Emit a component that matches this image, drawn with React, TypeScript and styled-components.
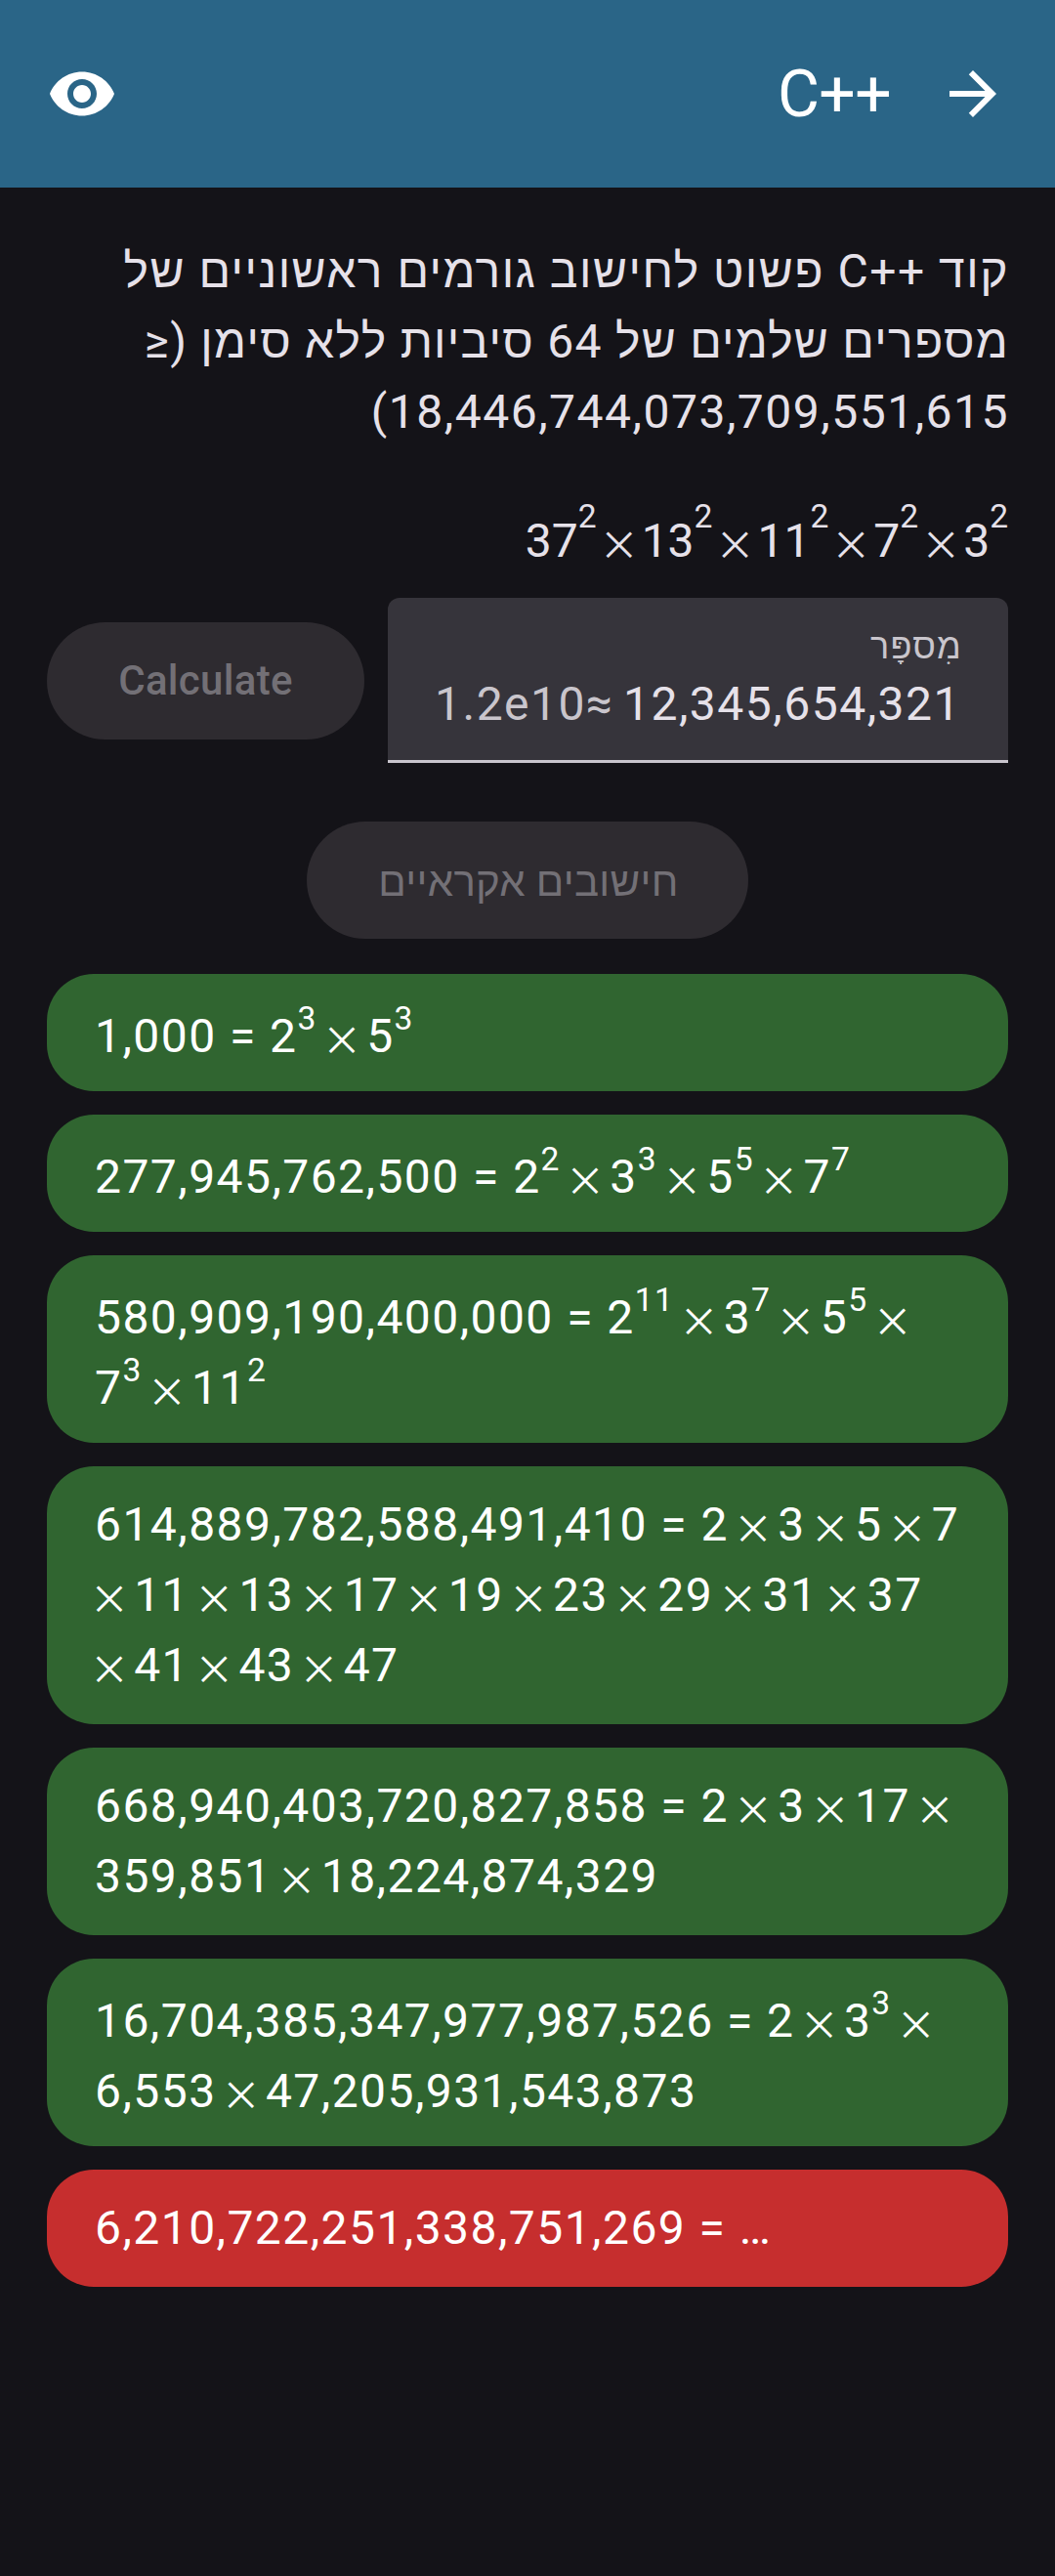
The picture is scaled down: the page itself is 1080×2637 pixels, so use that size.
import React from "react";
import styled, { createGlobalStyle } from "styled-components";

const GlobalStyle = createGlobalStyle`
  html, body { margin: 0; background: #141318; }
  body { font-family: Roboto, "Liberation Sans", sans-serif; }
`;

const Screen = styled.div`
  width: 1080px;
  height: 2637px;
  box-sizing: border-box;
  background: #141318;
  color: #e6e1e9;
  font-size: 48px;
  line-height: 72px;
  letter-spacing: 1.5px;
  overflow: hidden;
`;

const AppBar = styled.header`
  height: 192px;
  box-sizing: border-box;
  padding: 0 48px;
  display: flex;
  align-items: center;
  gap: 48px;
  background: #2a6587;
  color: #fff;
`;

const BarTitle = styled.h1`
  flex: 1;
  margin: 0;
  padding-top: 2px;
  font-size: 66px;
  font-weight: 400;
  line-height: 84px;
  letter-spacing: -0.6px;
  text-align: right;
`;

const Icon = styled.svg`
  display: block;
  width: 72px;
  height: 72px;
  fill: currentColor;
`;

const Content = styled.main`
  display: flex;
  flex-direction: column;
  padding: 50px 48px 0;
`;

const Description = styled.p`
  margin: 0 -1px 0 0;
  white-space: nowrap;
`;

const Tight = styled.span`
  letter-spacing: 1.28px;
`;

const Result = styled.div`
  margin-top: 60px;
  height: 82px;
  letter-spacing: 0;
  text-align: right;
  white-space: nowrap;
`;

const FormRow = styled.div`
  display: flex;
  align-items: center;
  gap: 24px;
  margin-top: 12px;
`;

const Field = styled.div`
  width: 635px;
  height: 169px;
  box-sizing: border-box;
  padding: 26px 48px 0;
  border-bottom: 3px solid #c9c5cd;
  border-radius: 12px 12px 0 0;
  background: #36343b;
`;

const FieldLabel = styled.div`
  margin-right: -1px;
  height: 47px;
  font-size: 36px;
  line-height: 48px;
  letter-spacing: 1.2px;
  color: #c9c5cc;
`;

const FieldValue = styled.div`
  display: flex;
  justify-content: space-between;
`;

const Suffix = styled.span`
  color: #c9c5cc;
`;

const Button = styled.button<{ $width: number }>`
  width: ${(p) => p.$width}px;
  height: 120px;
  padding: 0;
  border: 0;
  border-radius: 60px;
  background: #2e2b30;
  color: #737076;
  font-family: inherit;
  font-size: 42px;
  font-weight: 500;
  line-height: 60px;
  letter-spacing: 0.3px;
  white-space: nowrap;
`;

const RandomRow = styled.div`
  display: flex;
  justify-content: center;
  margin: 60px 0 36px;

  ${Button} {
    padding: 4px 0 0 2px;
    font-weight: 400;
  }
`;

const List = styled.div`
  display: flex;
  flex-direction: column;
  gap: 24px;
`;

const Card = styled.div<{ $lines: number; $raised?: boolean; $failed?: boolean }>`
  height: ${(p) => p.$lines * 72 + 48}px;
  box-sizing: border-box;
  padding: ${(p) => (p.$raised ? 28 : 24)}px 47px 0 49px;
  border-radius: 48px;
  background: ${(p) => (p.$failed ? "#c62e2e" : "#306530")};
  color: #fff;
  letter-spacing: 1.44px;
  text-align: left;
`;

const Line = styled.div`
  height: 72px;
  white-space: nowrap;
`;

const Exponent = styled.span<{ $rise: number }>`
  font-size: 33.6px;
  line-height: 0;
  vertical-align: ${(p) => p.$rise}px;
`;

const Times = styled.span<{ $gap: number }>`
  display: inline-block;
  width: 41px;
  margin: 0 ${(p) => p.$gap}px;
  font-family: "Noto Sans CJK SC", sans-serif;
  font-size: 41px;
  line-height: 0;
  letter-spacing: 0;
  text-align: center;
  vertical-align: -3px;

  ${Line} > &:first-child { margin-left: -5.5px; }
`;

/* Splits "2^3*5" into bases, raised exponents and multiplication signs. */
function Product({ text, rise = 23, gap = 4.7 }: { text: string; rise?: number; gap?: number }) {
  return (
    <>
      {(text.match(/\*|\^\d+|[^*^]+/g) ?? []).map((part, i) => {
        if (part === "*") return <Times key={i} $gap={gap}>×</Times>;
        if (part[0] === "^") return <Exponent key={i} $rise={rise}>{part.slice(1)}</Exponent>;
        return <span key={i}>{part}</span>;
      })}
    </>
  );
}

const cards = [
  { lines: ["1,000 = 2^3*5^3"] },
  { lines: ["277,945,762,500 = 2^2*3^3*5^5*7^7"] },
  { lines: ["580,909,190,400,000 = 2^11*3^7*5^5*", "7^3*11^2"] },
  { lines: ["614,889,782,588,491,410 = 2*3*5*7", "*11*13*17*19*23*29*31*37", "*41*43*47"] },
  { lines: ["668,940,403,720,827,858 = 2*3*17*", "359,851*18,224,874,329"] },
  { lines: ["16,704,385,347,977,987,526 = 2*3^3*", "6,553*47,205,931,543,873"] },
  { lines: ["6,210,722,251,338,751,269 = …"], failed: true },
];

export default function App() {
  return (
    <Screen>
      <GlobalStyle />
      <AppBar>
        <Icon viewBox="0 0 24 24">
          <path d="M12 4.5C7 4.5 2.73 7.61 1 12c1.73 4.39 6 7.5 11 7.5s9.27-3.11 11-7.5c-1.73-4.39-6-7.5-11-7.5zM12 17c-2.76 0-5-2.24-5-5s2.24-5 5-5 5 2.24 5 5-2.24 5-5 5zm0-8c-1.66 0-3 1.34-3 3s1.34 3 3 3 3-1.34 3-3-1.34-3-3-3z" />
        </Icon>
        <BarTitle>C++</BarTitle>
        <Icon viewBox="0 0 24 24">
          <path d="M12 4l-1.41 1.41L16.17 11H4v2h12.17l-5.58 5.59L12 20l8-8z" />
        </Icon>
      </AppBar>
      <Content dir="rtl">
        <Description>
          קוד <bdi dir="ltr">C++</bdi> פשוט לחישוב גורמים ראשוניים של
          <br />
          <Tight>מספרים שלמים של 64 סיביות ללא סימן (≤</Tight>
          <br />
          18,446,744,073,709,551,615)
        </Description>
        <Result dir="ltr">
          <Product text="37^2*13^2*11^2*7^2*3^2" rise={30} gap={2.5} />
        </Result>
        <FormRow>
          <Field>
            <FieldLabel>מִספָּר</FieldLabel>
            <FieldValue>
              <span>12,345,654,321</span>
              <Suffix dir="ltr">1.2e10≈</Suffix>
            </FieldValue>
          </Field>
          <Button $width={325} dir="ltr">Calculate</Button>
        </FormRow>
        <RandomRow>
          <Button $width={452}>חישובים אקראיים</Button>
        </RandomRow>
        <List dir="ltr">
          {cards.map((card) => (
            <Card
              key={card.lines[0]}
              $lines={card.lines.length}
              $raised={card.lines[0].includes("^")}
              $failed={card.failed}
            >
              {card.lines.map((line) => (
                <Line key={line}>
                  <Product text={line} />
                </Line>
              ))}
            </Card>
          ))}
        </List>
      </Content>
    </Screen>
  );
}
